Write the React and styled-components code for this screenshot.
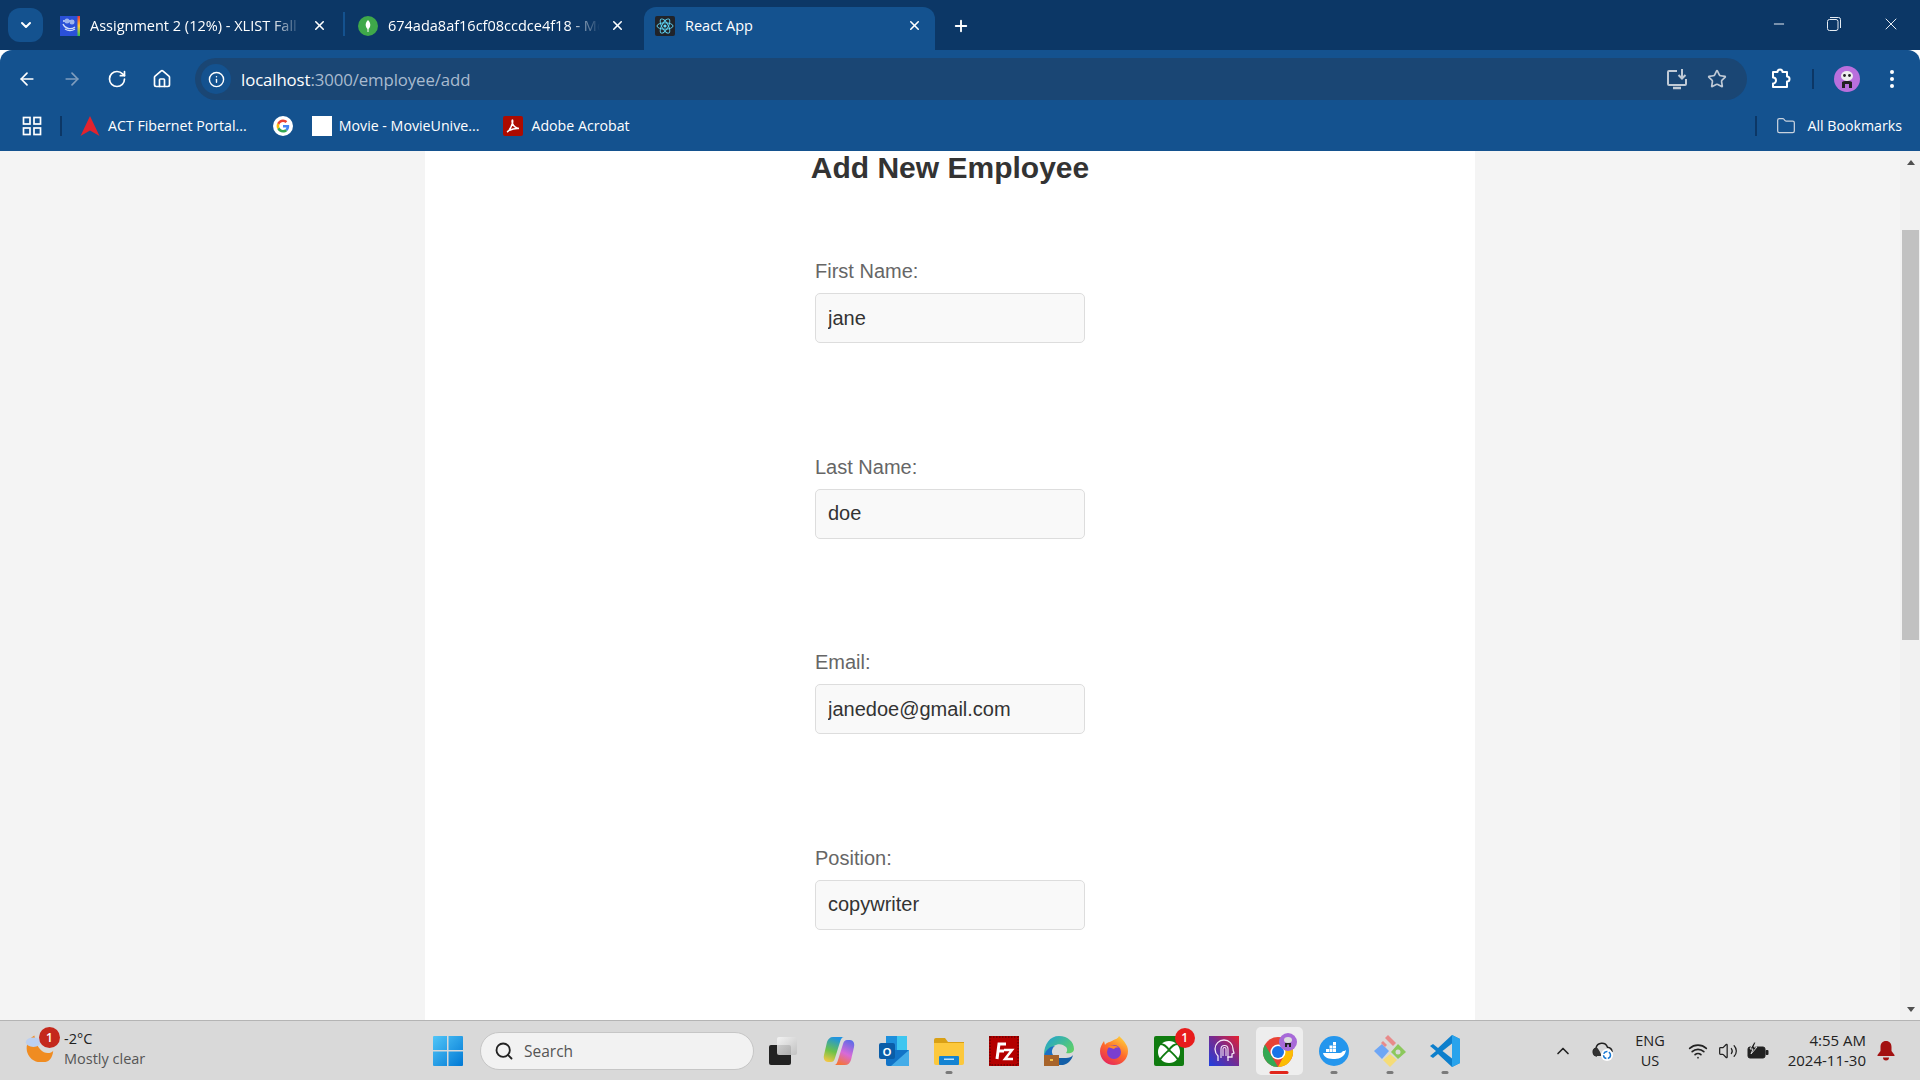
import styled, { createGlobalStyle } from "styled-components";
import {
  ArrowLeft,
  ArrowRight,
  RotateCw,
  Home,
  Info,
  Star,
  Folder,
  Plus,
  X,
  Minus,
  ChevronDown,
  ChevronUp,
  Search,
  Wifi,
  Volume2,
} from "lucide-react";

const GlobalStyle = createGlobalStyle`
  html, body { margin: 0; padding: 0; height: 100%; overflow: hidden; }
  body { font-family: "Liberation Sans", Arial, sans-serif; }
  * { box-sizing: border-box; }
`;

const chromeFont = `"Open Sans", "Noto Sans", sans-serif`;

const Screen = styled.div`
  display: flex;
  flex-direction: column;
  width: 1920px;
  height: 1080px;
  overflow: hidden;
`;

/* ---- browser chrome ---- */
const TabStrip = styled.div`
  display: flex;
  align-items: flex-end;
  height: 50px;
  padding-left: 8px;
  background: #0c3766;
  color: #fff;
  font-family: ${chromeFont};
  font-size: 14.5px;
`;

const TabSearch = styled.div`
  display: flex;
  align-items: center;
  justify-content: center;
  width: 35px;
  height: 34px;
  margin-right: 8px;
  margin-bottom: 8px;
  border-radius: 12px;
  background: #14528f;
`;

const Tab = styled.div`
  display: flex;
  align-items: center;
  width: ${(p) => p.$width}px;
  height: 43px;
  padding: 0 ${(p) => p.$pr}px 6px ${(p) => p.$pl}px;
  border-radius: 12px 12px 0 0;
  background: ${(p) => (p.$active ? "#14528f" : "transparent")};
`;

const TabSeparator = styled.div`
  width: 2px;
  height: 24px;
  margin-bottom: 14px;
  background: #14528f;
`;

const TabTitle = styled.span`
  flex: 1;
  margin-left: 10px;
  margin-right: ${(p) => (p.$fade ? 10 : 0)}px;
  overflow: hidden;
  white-space: nowrap;
  -webkit-mask-image: ${(p) =>
    p.$fade ? "linear-gradient(90deg, #000 85%, transparent)" : "none"};
`;

const NewTab = styled.div`
  display: flex;
  align-items: center;
  margin-left: 17px;
  height: 43px;
  padding-bottom: 6px;
`;

const WindowControls = styled.div`
  display: flex;
  margin-left: auto;
  align-self: flex-start;
  height: 48px;
  padding-right: 19px;
  gap: 40px;
  align-items: center;
  color: #e6ecf3;
`;

const Toolbar = styled.div`
  display: flex;
  align-items: center;
  height: 50px;
  padding-top: 8px;
  padding-left: 17px;
  background: #14528f;
  border-radius: 12px 12px 0 0;
  color: #fff;
`;

const NavButtons = styled.div`
  display: flex;
  align-items: center;
  gap: 25px;
  width: 178px;
`;

const AddressBar = styled.div`
  display: flex;
  align-items: center;
  width: 1552px;
  height: 42px;
  padding: 0 20px 0 6px;
  border-radius: 21px;
  background: #1a4674;
  font-family: ${chromeFont};
  font-size: 16.8px;
  letter-spacing: -0.1px;
`;

const InfoBadge = styled.div`
  display: flex;
  align-items: center;
  justify-content: center;
  width: 30px;
  height: 30px;
  margin-right: 10px;
  border-radius: 50%;
  background: #14528f;
`;

const UrlMuted = styled.span`
  color: #a9bbcf;
`;

const AddressActions = styled.div`
  display: flex;
  align-items: center;
  gap: 19px;
  margin-left: auto;
  color: #c0cad6;
`;

const ToolbarEnd = styled.div`
  display: flex;
  align-items: center;
  margin-left: 23px;
`;

const Divider = styled.div`
  width: 2px;
  height: 20px;
  background: #0c3766;
  margin: 0 ${(p) => p.$mr}px 0 ${(p) => p.$ml}px;
`;

const MenuDots = styled.svg`
  margin-left: 29px;
`;

const BookmarkBar = styled.div`
  display: flex;
  align-items: center;
  height: 51px;
  padding: 0 18px 0 22px;
  background: #14528f;
  color: #fff;
  font-family: ${chromeFont};
  font-size: 14.2px;
`;

const Bookmark = styled.div`
  display: flex;
  align-items: center;
  gap: ${(p) => p.$gap}px;
  margin-right: ${(p) => p.$mr}px;
  white-space: nowrap;
`;

const BookmarkEnd = styled.div`
  display: flex;
  align-items: center;
  margin-left: auto;
  gap: 11px;
`;

const WhiteSquare = styled.div`
  width: 20px;
  height: 20px;
  background: #fff;
`;

/* ---- page ---- */
const Viewport = styled.div`
  flex: 1;
  display: flex;
  min-height: 0;
  background: #f4f4f4;
`;

const PageArea = styled.div`
  flex: 1;
  display: flex;
  justify-content: center;
  overflow: hidden;
`;

const FormPage = styled.main`
  width: 1050px;
  height: 100%;
  background: #fff;
  display: flex;
  flex-direction: column;
  align-items: center;
`;

const Heading = styled.h2`
  flex-shrink: 0;
  margin: 0 0 75px;
  font-size: 30px;
  line-height: 34px;
  font-weight: 700;
  color: #333;
`;

const Field = styled.div`
  flex-shrink: 0;
  display: flex;
  flex-direction: column;
  width: 270px;
  height: 195.5px;
`;

const FieldLabel = styled.label`
  font-size: 20px;
  line-height: 23px;
  color: #666;
  margin-bottom: 10px;
`;

const FieldInput = styled.input`
  width: 270px;
  height: 50px;
  padding: 0 12px;
  border: 1px solid #ddd;
  border-radius: 5px;
  background: #f9f9f9;
  color: #333;
  font-family: "Liberation Sans", Arial, sans-serif;
  font-size: 20px;
  outline: none;
`;

const Scrollbar = styled.div`
  display: flex;
  flex-direction: column;
  align-items: center;
  width: 20px;
  background: #f1f1f1;
  padding: 9px 1px 8px 2px;
`;

const ScrollThumb = styled.div`
  width: 17px;
  height: 410px;
  margin-top: 65px;
  background: #c1c1c1;
`;

const ScrollArrow = styled.div`
  width: 0;
  height: 0;
  border-left: 4.5px solid transparent;
  border-right: 4.5px solid transparent;
  ${(p) => (p.$down ? "border-top" : "border-bottom")}: 5px solid #505050;
  margin-top: ${(p) => (p.$down ? "auto" : "0")};
`;

/* ---- taskbar ---- */
const Taskbar = styled.footer`
  display: flex;
  align-items: center;
  height: 60px;
  border-top: 1px solid #b4b4b4;
  background: #d9d9d9;
  color: #222;
  font-family: ${chromeFont};
  font-size: 14.5px;
`;

const Weather = styled.div`
  display: flex;
  align-items: center;
  width: 433px;
  padding-left: 25px;
  gap: 9px;
  position: relative;
`;

const WeatherText = styled.div`
  display: flex;
  flex-direction: column;
  line-height: 20px;
  padding-bottom: 3px;
`;

const Muted = styled.span`
  color: #555;
`;

const SearchBox = styled.div`
  display: flex;
  align-items: center;
  width: 274px;
  height: 38px;
  margin-left: 17px;
  padding-left: 13px;
  gap: 10px;
  border: 1px solid #c6c6c6;
  border-radius: 19px;
  background: #f2f2f2;
  color: #555;
  font-size: 15.5px;
`;

const AppSlot = styled.div`
  position: relative;
  display: flex;
  align-items: center;
  justify-content: center;
  width: 55.1px;
  height: 48px;
  margin-left: ${(p) => p.$ml || 0}px;
  ${(p) =>
    p.$active &&
    `
    &::before {
      content: "";
      position: absolute;
      top: 0;
      bottom: 0;
      left: 4px;
      right: 4px;
      border-radius: 5px;
      background: #eeeeee;
    }
  `}
  & > svg {
    position: relative;
  }
`;

const Pip = styled.div`
  position: absolute;
  bottom: 1px;
  left: 50%;
  transform: translateX(-50%);
  width: ${(p) => (p.$active ? 19 : 7)}px;
  height: 3px;
  border-radius: 2px;
  background: ${(p) => (p.$active ? "#e1251b" : "#7a7a7a")};
`;

const CountBadge = styled.div`
  position: absolute;
  display: flex;
  align-items: center;
  justify-content: center;
  width: ${(p) => p.$size}px;
  height: ${(p) => p.$size}px;
  top: ${(p) => p.$top}px;
  left: ${(p) => p.$left}px;
  border-radius: 50%;
  background: ${(p) => p.$color};
  color: #fff;
  font-size: 12px;
  font-weight: 600;
`;

const Tray = styled.div`
  display: flex;
  align-items: center;
  margin-left: auto;
  padding-right: 25px;
  color: #222;
`;

const TrayIcon = styled.div`
  display: flex;
  align-items: center;
  justify-content: center;
  width: ${(p) => p.$w}px;
`;

const Lang = styled.div`
  width: 66px;
  margin-left: 3px;
  display: flex;
  flex-direction: column;
  align-items: center;
  line-height: 20px;
  font-size: 14.5px;
`;

const Clock = styled.div`
  display: flex;
  flex-direction: column;
  align-items: flex-end;
  width: 93px;
  margin-right: 11px;
  padding-bottom: 2px;
  line-height: 20px;
  font-size: 15px;
`;

const WeatherGlyph = styled.svg`
  margin-bottom: 11px;
`;

/* ---- drawn favicons and logos ---- */
const UniIcon = () => (
  <svg width="20" height="20" viewBox="0 0 20 20">
    <defs>
      <linearGradient id="rb" x1="0" y1="0" x2="0" y2="1">
        <stop offset="0" stopColor="#e33" />
        <stop offset="0.5" stopColor="#fc3" />
        <stop offset="1" stopColor="#3b5" />
      </linearGradient>
    </defs>
    <rect width="20" height="20" fill="#2a50d8" />
    <rect x="17.500" width="2.500" height="20" fill="url(#rb)" />
    <path d="M3 5h11M3 8c2 5 8 6 12 3M5 13c3 2 7 2 10 0" fill="none" stroke="#cfdcf8" strokeWidth="1.300" />
    <circle cx="7" cy="5" r="2.500" fill="#9db4ee" />
    <circle cx="12" cy="6" r="2.500" fill="#9db4ee" />
  </svg>
);

const MongoIcon = () => (
  <svg width="20" height="20" viewBox="0 0 20 20">
    <circle cx="10" cy="10" r="10" fill="#3fa84a" />
    <path d="M10 4c2 2 2.600 4 2.200 6-.3 1.600-1.200 2.600-2.200 3.400-1-.8-1.900-1.800-2.200-3.400C7.400 8 8 6 10 4z" fill="#fff" />
    <rect x="9.500" y="13" width="1" height="3" fill="#fff" />
  </svg>
);

const ReactIcon = () => (
  <svg width="20" height="20" viewBox="0 0 20 20">
    <rect width="20" height="20" rx="2" fill="#20232a" />
    <g fill="none" stroke="#61dafb" strokeWidth="0.9">
      <ellipse cx="10" cy="10" rx="8" ry="3.200" />
      <ellipse cx="10" cy="10" rx="8" ry="3.200" transform="rotate(60 10 10)" />
      <ellipse cx="10" cy="10" rx="8" ry="3.200" transform="rotate(120 10 10)" />
    </g>
    <circle cx="10" cy="10" r="1.600" fill="#61dafb" />
  </svg>
);

const AppsIcon = () => (
  <svg width="20" height="20" viewBox="0 0 20 20" fill="none" stroke="#fff" strokeWidth="1.700">
    <rect x="1.500" y="1.500" width="6.500" height="6.500" />
    <rect x="12" y="1.500" width="6.500" height="6.500" />
    <rect x="1.500" y="12" width="6.500" height="6.500" />
    <rect x="12" y="12" width="6.500" height="6.500" />
  </svg>
);

const ActIcon = () => (
  <svg width="20" height="20" viewBox="0 0 20 20">
    <path d="M10 0l9.500 20-9.500-5.500L.5 20z" fill="#e2232e" />
  </svg>
);

const GoogleIcon = () => (
  <svg width="20" height="20" viewBox="0 0 20 20">
    <circle cx="10" cy="10" r="10" fill="#fff" />
    <path d="M16.200 10.200c0-.5 0-.9-.1-1.300H10v2.500h3.500c-.2.800-.6 1.400-1.300 1.900l2 1.600c1.200-1.100 2-2.700 2-4.700z" fill="#4285f4" />
    <path d="M10 16.500c1.700 0 3.200-.6 4.200-1.600l-2-1.600c-.6.400-1.300.6-2.200.6-1.700 0-3.100-1.100-3.600-2.600l-2.100 1.600c1 2.100 3.200 3.600 5.700 3.600z" fill="#34a853" />
    <path d="M6.400 11.300c-.3-.8-.3-1.700 0-2.600L4.300 7.100c-.9 1.800-.9 4 0 5.800z" fill="#fbbc05" />
    <path d="M10 6.100c1 0 1.800.3 2.500 1l1.800-1.800C13.200 4.200 11.700 3.500 10 3.500c-2.500 0-4.700 1.500-5.700 3.600l2.100 1.600C6.900 7.200 8.300 6.100 10 6.100z" fill="#ea4335" />
  </svg>
);

const AcrobatIcon = () => (
  <svg width="20" height="20" viewBox="0 0 20 20">
    <rect width="20" height="20" rx="2" fill="#ad0b00" />
    <path d="M4 16c2-1 4-4 5.500-9 .3-1.500.3-3 0-3-.6 0-.6 2 0 3.500 1 2.500 3 4.500 6.500 5-2.500-.3-7 .5-9.500 1.700"
      fill="none" stroke="#fff" strokeWidth="1.500" />
  </svg>
);

const InstallIcon = () => (
  <svg width="22" height="22" viewBox="0 0 22 22" fill="none" stroke="currentColor" strokeWidth="2">
    <path d="M11 3H3a1 1 0 0 0-1 1v12a1 1 0 0 0 1 1h16a1 1 0 0 0 1-1v-5" />
    <path d="M7 20h8" strokeWidth="2.500" />
    <path d="M16 1v9M12.500 7l3.500 3.500L19.500 7" />
  </svg>
);

const PuzzleIcon = () => (
  <svg width="22" height="22" viewBox="0 0 22 22" fill="none" stroke="#fff" strokeWidth="2" strokeLinejoin="round">
    <path d="M3 4h4.500a2.500 2.500 0 0 1 5 0H17v4.500a2.500 2.500 0 0 1 0 5V19H3v-3.500a3 3 0 0 0 0-6z" />
  </svg>
);

const Avatar = () => (
  <svg width="26" height="26" viewBox="0 0 26 26">
    <circle cx="13" cy="13" r="13" fill="#b96fdd" />
    <ellipse cx="13" cy="10" rx="6" ry="5" fill="#eee" />
    <circle cx="10.500" cy="9.500" r="1.400" fill="#222" />
    <circle cx="15.500" cy="9.500" r="1.400" fill="#222" />
    <path d="M8 22v-6c0-1.500 10-1.500 10 0v6h-3v-4h-4v4z" fill="#222" />
  </svg>
);

const RestoreIcon = () => (
  <svg width="14" height="14" viewBox="0 0 14 14" fill="none" stroke="#e6ecf3" strokeWidth="1">
    <rect x="0.500" y="2.500" width="10.500" height="11" rx="2" />
    <path d="M3 .5h8.500a2 2 0 0 1 2 2V11" />
  </svg>
);

const WeatherIcon = () => (
  <WeatherGlyph width="30" height="34" viewBox="0 0 30 36">
    <path d="M9 8a15 15 0 0 0 10 28c5 0 9-3 10-12-3 4-16 6-20-16z" fill="#f08c21" />
    <ellipse cx="8" cy="15" rx="8" ry="5" fill="#bcd0f0" />
  </WeatherGlyph>
);

const WinLogo = () => (
  <svg width="30" height="30" viewBox="0 0 30 30">
    <defs>
      <linearGradient id="win" x1="0" y1="0" x2="1" y2="1">
        <stop offset="0" stopColor="#52c6f8" />
        <stop offset="1" stopColor="#0078d4" />
      </linearGradient>
    </defs>
    <path d="M0 1a1 1 0 0 1 1-1h13v14H0zM15.500 0H29a1 1 0 0 1 1 1v13H15.500zM0 15.500h14V30H1a1 1 0 0 1-1-1zM15.500 15.500H30V29a1 1 0 0 1-1 1H15.500z" fill="url(#win)" />
  </svg>
);

const TaskViewIcon = () => (
  <svg width="30" height="30" viewBox="0 0 30 30">
    <defs>
      <linearGradient id="tv" x1="0" y1="0" x2="1" y2="1">
        <stop offset="0" stopColor="#f8f8f8" />
        <stop offset="1" stopColor="#bdbdbd" />
      </linearGradient>
    </defs>
    <rect x="1" y="9" width="22" height="20" rx="2" fill="#222" />
    <rect x="9" y="1" width="20" height="18" rx="2" fill="url(#tv)" opacity="0.85" />
  </svg>
);

const CopilotIcon = () => (
  <svg width="32" height="30" viewBox="0 0 32 30">
    <defs>
      <linearGradient id="cp1" x1="0.500" y1="0" x2="0.200" y2="1">
        <stop offset="0" stopColor="#1f93e0" />
        <stop offset="0.55" stopColor="#6cc24a" />
        <stop offset="1" stopColor="#f6c744" />
      </linearGradient>
      <linearGradient id="cp2" x1="0.800" y1="0" x2="0.400" y2="1">
        <stop offset="0" stopColor="#5a6be8" />
        <stop offset="0.55" stopColor="#d86ad8" />
        <stop offset="1" stopColor="#f4743b" />
      </linearGradient>
    </defs>
    <path d="M10 1c-3 0-5 2-6 5L1 19c-1 4 1 7 4 7h3c2 0 3-1 4-4l5-16c.7-3 2-5 4-5z" fill="url(#cp1)" />
    <path d="M22 29c3 0 5-2 6-5l3-13c1-4-1-7-4-7h-3c-2 0-3 1-4 4l-5 16c-.7 3-2 5-4 5z" fill="url(#cp2)" />
  </svg>
);

const OutlookIcon = () => (
  <svg width="30" height="30" viewBox="0 0 30 30">
    <rect x="7" y="0" width="21" height="14" fill="#1d8fdc" />
    <rect x="18" y="0" width="10" height="14" fill="#3ec6f0" />
    <path d="M7 14h23v14a2 2 0 0 1-2 2H9a2 2 0 0 1-2-2z" fill="#1173c7" />
    <path d="M30 14v16H12z" fill="#44ace8" />
    <rect x="0" y="7" width="16" height="16" rx="2" fill="#0a5da8" />
    <text x="8" y="19.500" textAnchor="middle" fontFamily="Liberation Sans" fontWeight="700" fontSize="11" fill="#fff">O</text>
  </svg>
);

const FilesIcon = () => (
  <svg width="30" height="28" viewBox="0 0 30 28">
    <path d="M0 3a2 2 0 0 1 2-2h9l3 4h16v4H0z" fill="#d9a015" />
    <path d="M0 6h30v20a2 2 0 0 1-2 2H2a2 2 0 0 1-2-2z" fill="#fcc83c" />
    <rect x="5" y="19" width="20" height="9" rx="1" fill="#1483d2" />
    <rect x="10" y="21.500" width="10" height="1.500" fill="#bfe3fb" />
  </svg>
);

const FileZillaIcon = () => (
  <svg width="30" height="30" viewBox="0 0 30 30">
    <rect width="30" height="30" fill="#b40000" />
    <rect x="1" y="1" width="28" height="28" fill="none" stroke="#7e0000" strokeDasharray="1.500 1.500" strokeWidth="2" />
    <path d="M8 23l2-15h7M9 15h6" fill="none" stroke="#fff" strokeWidth="3" />
    <path d="M15 14h8l-7 9h8" fill="none" stroke="#fff" strokeWidth="2.500" />
  </svg>
);

const EdgeIcon = () => (
  <svg width="30" height="30" viewBox="0 0 30 30">
    <defs>
      <linearGradient id="edge" x1="0" y1="0" x2="1" y2="0.700">
        <stop offset="0" stopColor="#1c9fd8" />
        <stop offset="1" stopColor="#5fd068" />
      </linearGradient>
    </defs>
    <path d="M15 0c9 0 15 6 15 13 0 4-5 5-8 4 2-2 1-5 0-6-3-3-8-4-12-1-4 2-8 5-10 9C0 8 6 0 15 0z" fill="url(#edge)" />
    <path d="M0 19c2-5 6-9 11-9-3 2-4 6-2 9z" fill="#1a6fc4" />
    <path d="M15 22h7c3 0 6-1 7-3-1 5-5 9-10 10h-4z" fill="#135fa8" />
    <rect x="0" y="19" width="15" height="11" fill="#a7642b" />
    <rect x="6" y="23" width="3" height="2" fill="#f4c24a" />
  </svg>
);

const FirefoxIcon = () => (
  <svg width="30" height="30" viewBox="0 0 30 30">
    <defs>
      <linearGradient id="ff" x1="0.800" y1="0" x2="0.200" y2="1">
        <stop offset="0" stopColor="#ffd43a" />
        <stop offset="0.5" stopColor="#ff6a2a" />
        <stop offset="1" stopColor="#e3205f" />
      </linearGradient>
    </defs>
    <path d="M20 0c5 5 9 9 9 15 0 8-6 14-14 14S1 23 1 15c0-4 2-7 4-10l1 4c2-3 5-3 7-4 3-2 6-2 7-5z" fill="url(#ff)" />
    <circle cx="15" cy="16" r="7" fill="#7a3ed0" />
    <path d="M9 11c3-2 8-2 11 1-3-1-4 0-5 1-2-1-4-1-6-2z" fill="#ff8a2a" />
  </svg>
);

const XboxIcon = () => (
  <svg width="30" height="30" viewBox="0 0 30 30">
    <rect width="30" height="30" rx="2" fill="#107c10" />
    <circle cx="15" cy="16" r="11" fill="#fff" />
    <path d="M6 8c4 0 7 3 9 6 2-3 5-6 9-6M5 25c3-5 7-8 10-11 3 3 7 6 10 11" fill="none" stroke="#107c10" strokeWidth="1.800" />
  </svg>
);

const ProtonIcon = () => (
  <svg width="30" height="30" viewBox="0 0 30 30">
    <defs>
      <linearGradient id="pr" x1="0" y1="1" x2="1" y2="0">
        <stop offset="0" stopColor="#1e3fe0" />
        <stop offset="0.55" stopColor="#7a2a8c" />
        <stop offset="1" stopColor="#e8202f" />
      </linearGradient>
    </defs>
    <rect width="30" height="30" fill="url(#pr)" />
    <path d="M9 25v-5c-2-2-3-4-3-7a9 9 0 0 1 18 0c0 2 1 3 1 4l-2 1v3h-4v4" fill="none" stroke="#f5e6f5" strokeWidth="1.300" />
    <path d="M12 22v-9a3.500 3.500 0 0 1 7 0v9M14 20v-7a1.500 1.500 0 0 1 3 0v7" fill="none" stroke="#f5e6f5" strokeWidth="1.100" />
  </svg>
);

const ChromeIcon = () => (
  <svg width="36" height="36" viewBox="0 0 36 36">
    <circle cx="17" cy="19" r="15" fill="#e94235" />
    <path d="M17 34a15 15 0 0 1-13-22.500l7.500 13z" fill="#34a853" />
    <path d="M17 34a15 15 0 0 0 13-22.500H17l5 13z" fill="#fbbc04" />
    <circle cx="17" cy="19" r="7.500" fill="#fff" />
    <circle cx="17" cy="19" r="6" fill="#1a73e8" />
    <circle cx="27" cy="9" r="9" fill="#a76ad8" />
    <ellipse cx="27" cy="7" rx="4" ry="3" fill="#ddd" />
    <path d="M24 14v-4h6v4h-2v-2.500h-2V14z" fill="#222" />
  </svg>
);

const DockerIcon = () => (
  <svg width="30" height="30" viewBox="0 0 30 30">
    <circle cx="15" cy="15" r="15" fill="#2496ed" />
    <g fill="#fff">
      <rect x="7" y="13" width="3" height="3" />
      <rect x="10.500" y="13" width="3" height="3" />
      <rect x="14" y="13" width="3" height="3" />
      <rect x="10.500" y="9.500" width="3" height="3" />
      <rect x="14" y="9.500" width="3" height="3" />
      <rect x="14" y="6" width="3" height="3" />
      <path d="M4 17h17c1 0 2-1 3-2 1 0 2 0 3-1-.6 6-6 9-11 9-6 0-11-1-12-6z" />
    </g>
  </svg>
);

const GitKrakenIcon = () => (
  <svg width="32" height="32" viewBox="0 0 32 32">
    <path d="M8 9l7 7-7 8-8-8z" fill="#6ea6f5" />
    <path d="M24 9l8 8-8 7-7-7z" fill="#8cc85c" />
    <path d="M16 19l7 6-7 7-7-7z" fill="#f5dc78" />
    <path d="M14 0l8 8-3 3-8-8z" fill="#e88a8a" />
    <path d="M9 6l4 4-2 2-4-4z" fill="#e88a8a" />
    <circle cx="24" cy="17" r="2.500" fill="#d9d9d9" />
  </svg>
);

const VSCodeIcon = () => (
  <svg width="30" height="32" viewBox="0 0 30 32">
    <path d="M22 0l8 4v24l-8 4L8 19l-5 4-3-2 6-5-6-5 3-2 5 4z" fill="#0d7fcc" />
    <path d="M22 0l8 4v24l-8 4z" fill="#29a3ec" />
    <path d="M22 8.500v15L12.500 16z" fill="#d9d9d9" />
  </svg>
);

const OneDriveSync = () => (
  <svg width="22" height="20" viewBox="0 0 22 20">
    <path d="M5 15a4 4 0 0 1-1-7.800 6 6 0 0 1 11.500-1A4.500 4.500 0 0 1 20 11" fill="none" stroke="#222" strokeWidth="1.500" />
    <path d="M5 15a4 4 0 0 1-1-7.800C5 5 7 9 10 15z" fill="#333" />
    <circle cx="15" cy="14" r="6" fill="#fff" />
    <circle cx="15" cy="14" r="3.500" fill="none" stroke="#1677d2" strokeWidth="1.500" strokeDasharray="4.500 1.500" />
  </svg>
);

const BatteryIcon = () => (
  <svg width="22" height="18" viewBox="0 0 22 18">
    <rect x="1" y="5" width="17" height="11" rx="2" fill="#222" stroke="#222" />
    <rect x="18.500" y="8" width="3" height="5" rx="1" fill="#222" />
    <path d="M7 0L3 7h3L4 12l6-7H7l2-5z" fill="#222" stroke="#d9d9d9" strokeWidth="1" />
  </svg>
);

const BellIcon = () => (
  <svg width="18" height="20" viewBox="0 0 18 20" fill="#a31212">
    <path d="M9 0c3.500 0 5.500 2.500 5.500 6v4l3 4v1H.5v-1l3-4V6C3.500 2.500 5.500 0 9 0z" />
    <path d="M6 16.500h6a3 3 0 0 1-6 0z" />
  </svg>
);

const apps = [
  { icon: <TaskViewIcon />, ml: 1 },
  { icon: <CopilotIcon />, ml: 1 },
  { icon: <OutlookIcon /> },
  { icon: <FilesIcon />, pip: true },
  { icon: <FileZillaIcon /> },
  { icon: <EdgeIcon /> },
  { icon: <FirefoxIcon /> },
  { icon: <XboxIcon />, badge: true },
  { icon: <ProtonIcon /> },
  { icon: <ChromeIcon />, active: true },
  { icon: <DockerIcon />, pip: true },
  { icon: <GitKrakenIcon />, pip: true },
  { icon: <VSCodeIcon />, pip: true },
];

const fields = [
  { label: "First Name:", value: "jane" },
  { label: "Last Name:", value: "doe" },
  { label: "Email:", value: "janedoe@gmail.com" },
  { label: "Position:", value: "copywriter" },
];

const App = () => {
  return (
    <Screen>
      <GlobalStyle />
      <TabStrip>
        <TabSearch>
          <ChevronDown size={16} strokeWidth={3} />
        </TabSearch>
        <Tab $width={292} $pl={9} $pr={16}>
          <UniIcon />
          <TabTitle $fade>Assignment 2 (12%) - XLIST Fall 2024</TabTitle>
          <X size={15} strokeWidth={2.5} />
        </Tab>
        <TabSeparator />
        <Tab $width={299} $pl={13} $pr={19}>
          <MongoIcon />
          <TabTitle $fade>674ada8af16cf08ccdce4f18 - MongoDB</TabTitle>
          <X size={15} strokeWidth={2.5} />
        </Tab>
        <Tab $width={291} $pl={11} $pr={13} $active>
          <ReactIcon />
          <TabTitle>React App</TabTitle>
          <X size={15} strokeWidth={2.5} />
        </Tab>
        <NewTab>
          <Plus size={18} strokeWidth={2.5} />
        </NewTab>
        <WindowControls>
          <Minus size={16} strokeWidth={1.5} />
          <RestoreIcon />
          <X size={20} strokeWidth={1.2} />
        </WindowControls>
      </TabStrip>

      <Toolbar>
        <NavButtons>
          <ArrowLeft size={20} />
          <ArrowRight size={20} color="#7f9dbe" />
          <RotateCw size={20} />
          <Home size={20} />
        </NavButtons>
        <AddressBar>
          <InfoBadge>
            <Info size={17} />
          </InfoBadge>
          <span>
            localhost<UrlMuted>:3000/employee/add</UrlMuted>
          </span>
          <AddressActions>
            <InstallIcon />
            <Star size={20} />
          </AddressActions>
        </AddressBar>
        <ToolbarEnd>
          <PuzzleIcon />
          <Divider $ml={20} $mr={20} />
          <Avatar />
          <MenuDots width="6" height="20" viewBox="0 0 6 20" fill="#fff">
            <circle cx="3" cy="3" r="2" />
            <circle cx="3" cy="10" r="2" />
            <circle cx="3" cy="17" r="2" />
          </MenuDots>
        </ToolbarEnd>
      </Toolbar>

      <BookmarkBar>
        <AppsIcon />
        <Divider $ml={18} $mr={18} />
        <Bookmark $gap={8} $mr={26}>
          <ActIcon />
          ACT Fibernet Portal...
        </Bookmark>
        <Bookmark $gap={0} $mr={19}>
          <GoogleIcon />
        </Bookmark>
        <Bookmark $gap={7} $mr={24}>
          <WhiteSquare />
          Movie - MovieUnive...
        </Bookmark>
        <Bookmark $gap={8} $mr={0}>
          <AcrobatIcon />
          Adobe Acrobat
        </Bookmark>
        <BookmarkEnd>
          <Divider $ml={0} $mr={8} />
          <Folder size={20} strokeWidth={1.5} color="#c8d2de" />
          All Bookmarks
        </BookmarkEnd>
      </BookmarkBar>

      <Viewport>
        <PageArea>
          <FormPage>
            <Heading>Add New Employee</Heading>
            {fields.map((f) => (
              <Field key={f.label}>
                <FieldLabel>{f.label}</FieldLabel>
                <FieldInput defaultValue={f.value} />
              </Field>
            ))}
          </FormPage>
        </PageArea>
        <Scrollbar>
          <ScrollArrow />
          <ScrollThumb />
          <ScrollArrow $down />
        </Scrollbar>
      </Viewport>

      <Taskbar>
        <Weather>
          <WeatherIcon />
          <CountBadge $size={21} $top={-1} $left={39} $color="#c4281c">
            1
          </CountBadge>
          <WeatherText>
            <span>-2°C</span>
            <Muted>Mostly clear</Muted>
          </WeatherText>
        </Weather>
        <WinLogo />
        <SearchBox>
          <Search size={20} color="#222" strokeWidth={2.2} />
          Search
        </SearchBox>
        {apps.map((a, i) => (
          <AppSlot key={i} $active={a.active} $ml={a.ml}>
            {a.icon}
            {a.badge && (
              <CountBadge $size={20} $top={1} $left={33} $color="#e81c1c">
                1
              </CountBadge>
            )}
            {(a.pip || a.active) && <Pip $active={a.active} />}
          </AppSlot>
        ))}
        <Tray>
          <TrayIcon $w={58}>
            <ChevronUp size={20} />
          </TrayIcon>
          <OneDriveSync />
          <Lang>
            <span>ENG</span>
            <span>US</span>
          </Lang>
          <TrayIcon $w={30}>
            <Wifi size={20} />
          </TrayIcon>
          <TrayIcon $w={30}>
            <Volume2 size={20} strokeWidth={1.5} />
          </TrayIcon>
          <TrayIcon $w={30}>
            <BatteryIcon />
          </TrayIcon>
          <Clock>
            <span>4:55 AM</span>
            <span>2024-11-30</span>
          </Clock>
          <BellIcon />
        </Tray>
      </Taskbar>
    </Screen>
  );
};

export default App;
